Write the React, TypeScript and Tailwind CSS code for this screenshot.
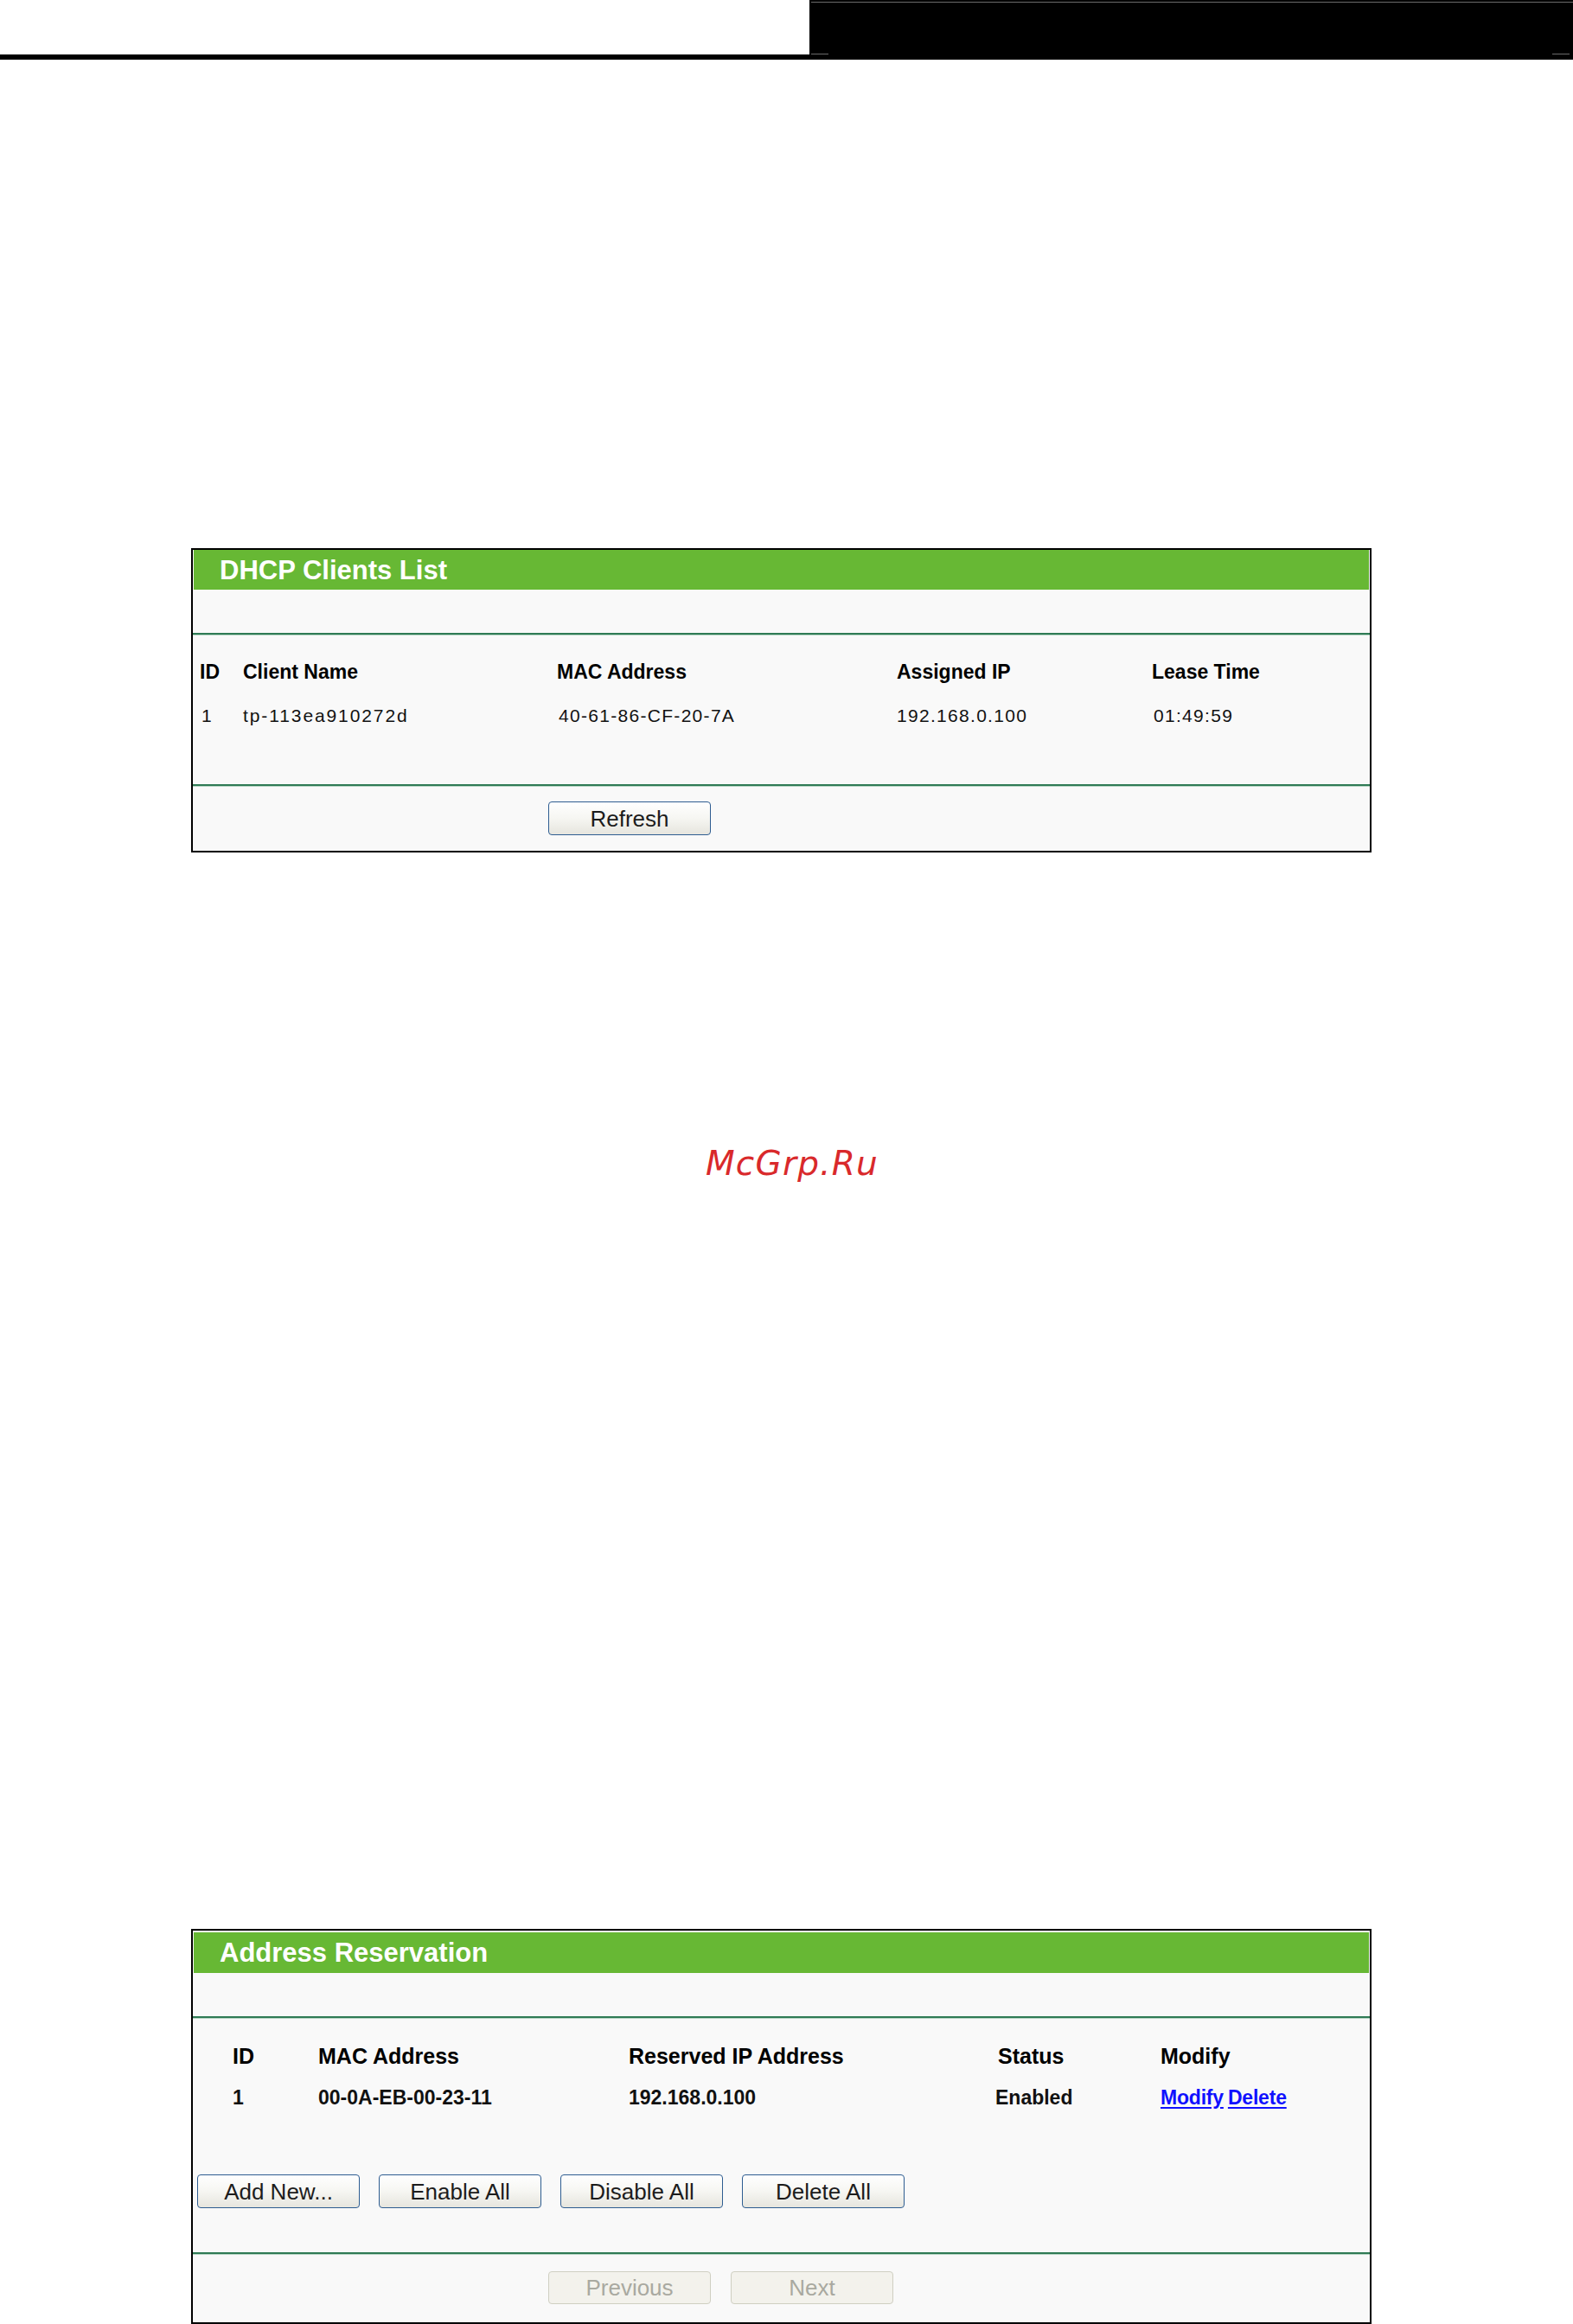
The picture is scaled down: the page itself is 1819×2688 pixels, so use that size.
import React from "react";

const sans = "font-['Liberation_Sans',Arial,sans-serif]";

function Btn({ label }: { label: string }) {
  return (
    <button
      type="button"
      className={`h-[39px] w-[188px] rounded-[4px] border-[1.5px] border-[#2e5d91] bg-linear-to-b from-[#ffffff] via-[#f6f6f2] to-[#e6e5de] text-[26px] leading-none text-[#1c1c1c] ${sans}`}
    >
      {label}
    </button>
  );
}

function DisabledBtn({ label }: { label: string }) {
  return (
    <button
      type="button"
      disabled
      className={`h-[38px] w-[188px] rounded-[4px] border-[1.5px] border-[#cfcfc2] bg-[#f3f2ec] text-[26px] leading-none text-[#a9a9a0] ${sans}`}
    >
      {label}
    </button>
  );
}

function GreenLine() {
  return (
    <div className="flex flex-col">
      <div className="h-[2px] bg-[#2f7b55]" />
      <div className="h-[1px] bg-[#b7d6c4]" />
    </div>
  );
}

export default function App() {
  return (
    <div className={`relative h-[2688px] w-[1819px] overflow-hidden bg-white ${sans}`}>
      {/* top header */}
      <div className="flex h-[63px]">
        <div className="flex-1 bg-white" />
        <div className="relative w-[883px] bg-black">
          <div className="absolute left-[2px] right-0 top-[2px] h-[1px] bg-[#6b6b6b]" />
          <div className="absolute bottom-0 left-[2px] h-[1px] w-[20px] bg-[#6b6b6b]" />
          <div className="absolute bottom-0 right-[4px] h-[1px] w-[20px] bg-[#6b6b6b]" />
        </div>
      </div>
      <div className="h-[6px] bg-black" />

      {/* DHCP Clients List */}
      <div className="ml-[221px] mt-[565px] w-[1365px] border-2 border-black bg-[#f9f9f9]">
        <div className="px-[1px]">
          <div className="flex h-[46px] items-center bg-[#67b834] pl-[30px] text-[31px] font-bold leading-none text-white">
            DHCP Clients List
          </div>
        </div>
        <div className="h-[50px]" />
        <GreenLine />
        <div className="mt-[27px] grid h-[30px] grid-cols-[50px_363px_393px_295px_1fr] pl-[8px] text-[23px] font-bold leading-[30px] text-black">
          <div>ID</div>
          <div>Client Name</div>
          <div>MAC Address</div>
          <div>Assigned IP</div>
          <div>Lease Time</div>
        </div>
        <div className="mt-[21px] grid h-[30px] grid-cols-[50px_363px_393px_295px_1fr] pl-[10px] text-[21px] leading-[30px] tracking-[1.3px] text-[#111]">
          <div>1</div>
          <div className="-ml-[2px] tracking-[1.9px]">tp-113ea910272d</div>
          <div>40-61-86-CF-20-7A</div>
          <div className="-ml-[2px]">192.168.0.100</div>
          <div>01:49:59</div>
        </div>
        <div className="h-[64px]" />
        <GreenLine />
        <div className="mt-[17px] flex pl-[411px]">
          <Btn label="Refresh" />
        </div>
        <div className="h-[18px]" />
      </div>

      {/* watermark */}
      <div className="mt-[337px] h-[46px] pl-[816px] font-['DejaVu_Sans',Verdana,sans-serif] text-[39px] italic leading-[46px] tracking-[1.2px] text-[#d9292b]">
        McGrp.Ru
      </div>

      {/* Address Reservation */}
      <div className="ml-[221px] mt-[862px] w-[1365px] border-2 border-black bg-[#f9f9f9]">
        <div className="px-[1px] pt-[2px]">
          <div className="flex h-[47px] items-center bg-[#67b834] pl-[30px] text-[31px] font-bold leading-none text-white">
            Address Reservation
          </div>
        </div>
        <div className="h-[50px]" />
        <GreenLine />
        <div className="mt-[27px] grid h-[32px] grid-cols-[99px_359px_427px_188px_1fr] pl-[46px] text-[25px] font-bold leading-[32px] text-black">
          <div>ID</div>
          <div>MAC Address</div>
          <div>Reserved IP Address</div>
          <div>Status</div>
          <div>Modify</div>
        </div>
        <div className="mt-[17px] grid h-[30px] grid-cols-[99px_359px_427px_188px_1fr] pl-[46px] text-[23px] font-bold leading-[30px] text-[#111]">
          <div>1</div>
          <div>00-0A-EB-00-23-11</div>
          <div>192.168.0.100</div>
          <div className="-ml-[3px]">Enabled</div>
          <div className="flex gap-[5px] tracking-[-0.2px]">
            <a href="#" className="text-[#1010ff] underline underline-offset-[3px]">
              Modify
            </a>
            <a href="#" className="text-[#1010ff] underline underline-offset-[3px]">
              Delete
            </a>
          </div>
        </div>
        <div className="mt-[74px] flex gap-[22px] pl-[5px]">
          <Btn label="Add New..." />
          <Btn label="Enable All" />
          <Btn label="Disable All" />
          <Btn label="Delete All" />
        </div>
        <div className="h-[51px]" />
        <GreenLine />
        <div className="mt-[19px] flex gap-[23px] pl-[411px]">
          <DisabledBtn label="Previous" />
          <DisabledBtn label="Next" />
        </div>
        <div className="h-[21px]" />
      </div>
    </div>
  );
}
